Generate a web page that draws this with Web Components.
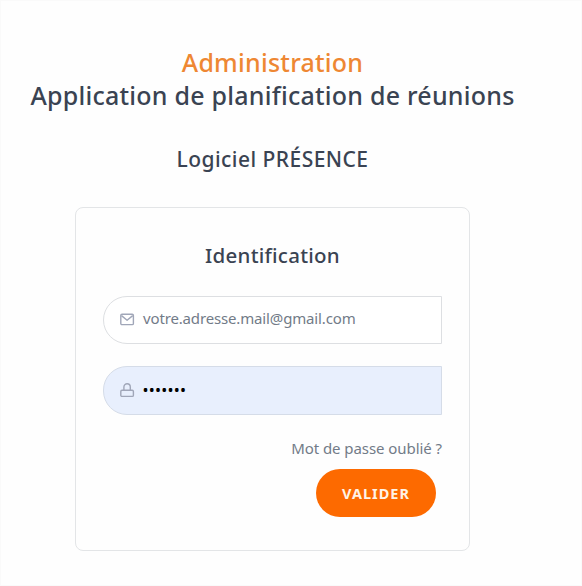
<!DOCTYPE html>
<html lang="fr">
<head>
<meta charset="utf-8">
<title>Administration - Logiciel PRÉSENCE</title>
<style>
  html, body { margin: 0; height: 100%; }
  body {
    background: #fefefe;
    color: #3a4352;
    font-family: "Noto Sans", "Open Sans", sans-serif;
  }
</style>
</head>
<body>
<login-page>
  <page-heading slot="heading" product="Logiciel PRÉSENCE">
    <span slot="area">Administration</span>
    <span slot="app">Application de planification de réunions</span>
  </page-heading>
  <login-card heading="Identification">
    <icon-field icon="mail">votre.adresse.mail@gmail.com</icon-field>
    <icon-field icon="lock" filled>•••••••</icon-field>
    <forgot-link slot="actions">Mot de passe oublié ?</forgot-link>
    <submit-button slot="actions">VALIDER</submit-button>
  </login-card>
</login-page>

<script>
// Base: renders the template of the component into its shadow root
class BaseElement extends HTMLElement {
  constructor() {
    super();
    this._shadow = this.attachShadow({ mode: 'open' });
  }

  connectedCallback() {
    this._shadow.innerHTML = this._template();
  }
}

// <login-page>: page frame, content column
class LoginPage extends BaseElement {
  _template() {
    return `
      <style>
        :host { display: block; box-sizing: border-box; width: 582px; height: 586px; border: 1px solid #fafafa; overflow: hidden; }
        main { display: flex; flex-direction: column; align-items: center; width: 543px; padding-top: 45px; }
      </style>
      <main>
        <slot name="heading"></slot>
        <slot></slot>
      </main>`;
  }
}

// <page-heading>: two-line title and product name
class PageHeading extends BaseElement {
  _template() {
    return `
      <style>
        :host { display: block; text-align: center; white-space: nowrap; }
        h1, h2 { margin: 0; font-weight: 500; }
        h1 { font-size: 25px; line-height: 33px; letter-spacing: .24px; }
        .area { display: block; color: #ee8733; }
        .app { display: block; }
        h2 { margin-top: 33px; font-size: 21px; line-height: 28px; letter-spacing: .45px; }
      </style>
      <h1>
        <span class="area"><slot name="area"></slot></span>
        <span class="app"><slot name="app"></slot></span>
      </h1>
      <h2>${this.getAttribute('product')}</h2>`;
  }
}

// <login-card>: bordered form panel
class LoginCard extends BaseElement {
  _template() {
    return `
      <style>
        :host {
          display: block; box-sizing: border-box; width: 395px; height: 344px;
          margin-top: 34px; padding: 33px 27px 0;
          border: 1px solid #e3e5e7; border-radius: 8px;
        }
        h3 { margin: 0 0 27px; text-align: center; font-size: 20.5px; font-weight: 500; line-height: 28px; letter-spacing: .25px; }
        .fields { display: flex; flex-direction: column; gap: 22px; }
        .actions { display: flex; flex-direction: column; align-items: flex-end; margin-top: 21px; }
      </style>
      <h3>${this.getAttribute('heading')}</h3>
      <div class="fields"><slot></slot></div>
      <div class="actions"><slot name="actions"></slot></div>`;
  }
}

const ICONS = {
  mail: `<rect x=".8" y="2.2" width="12.6" height="10.4" rx="1.2"/><path d="M1.5 3.6 7.1 8.2 12.7 3.6"/>`,
  lock: `<rect x=".8" y="7.2" width="12.6" height="6.2" rx="1.2"/><path d="M3.9 7.2V4a3.2 3.2 0 0 1 6.4 0v3.2"/>`,
};

// <icon-field>: field rounded on the left side
class IconField extends BaseElement {
  _template() {
    return `
      <style>
        :host {
          display: flex; align-items: center; gap: 8px; box-sizing: border-box;
          height: 48px; padding: 0 0 2px 16px;
          border: 1px solid #dddfe2; border-radius: 24px 0 0 24px;
          background: #fff; color: #727b88;
          font-size: 15px; line-height: 20px; white-space: nowrap;
        }
        :host([filled]) { height: 49px; padding-bottom: 1px; background: #e8effd; border-color: #d5dce8; color: #000; }
        svg { flex: none; width: 15px; height: 15px; fill: none; stroke: #a0a6b8; stroke-width: 1.4; stroke-linejoin: round; }
        .value { padding-bottom: 2px; letter-spacing: -.15px; }
        :host([filled]) .value { padding: 0; font-size: 16px; letter-spacing: .25px; margin-left: -.5px; }
      </style>
      <svg viewBox="0 0 15 15">${ICONS[this.getAttribute('icon')]}</svg>
      <span class="value"><slot></slot></span>`;
  }
}

// <forgot-link>: password reset link
class ForgotLink extends BaseElement {
  _template() {
    return `
      <style>
        :host { display: block; color: #727b88; font-size: 15px; line-height: 24px; letter-spacing: -.06px; cursor: pointer; }
      </style>
      <slot></slot>`;
  }
}

// <submit-button>: orange pill
class SubmitButton extends BaseElement {
  _template() {
    return `
      <style>
        :host { display: block; margin: 9px 6px 0 0; }
        button {
          display: block; width: 120px; height: 48px; padding: 1px 0 0; border: 0; border-radius: 24px;
          background: #fd6a00; color: #fff3e6; cursor: pointer;
          font: 700 14.5px/47px "Noto Sans", "Open Sans", sans-serif; letter-spacing: 1px;
        }
      </style>
      <button type="button"><slot></slot></button>`;
  }
}

customElements.define('login-page', LoginPage);
customElements.define('page-heading', PageHeading);
customElements.define('login-card', LoginCard);
customElements.define('icon-field', IconField);
customElements.define('forgot-link', ForgotLink);
customElements.define('submit-button', SubmitButton);
</script>
</body>
</html>
